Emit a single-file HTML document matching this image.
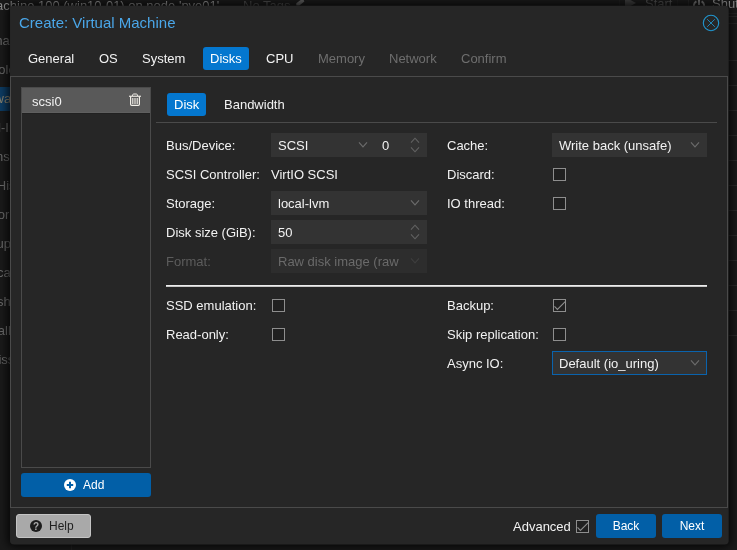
<!DOCTYPE html>
<html><head><meta charset="utf-8"><title>Create: Virtual Machine</title>
<style>
*{box-sizing:border-box;margin:0;padding:0}
html,body{width:737px;height:550px;overflow:hidden;background:#0e0e0e}
body{font-family:"Liberation Sans",sans-serif;font-size:13px;color:#f2f2f2;position:relative}
#bg{position:absolute;left:0;top:0;width:737px;height:550px;background:#1a1a1a;overflow:hidden}
#win{position:absolute;left:10px;top:6px;width:718px;height:538px;background:#262626;border-radius:4px;box-shadow:0 0 9px 3px rgba(0,0,0,.75)}
.t{position:absolute;white-space:nowrap;line-height:16px;color:#f2f2f2}
.dim{color:#6e6e6e}
.fld{position:absolute;height:24px;background:#333;color:#f2f2f2;line-height:26px;padding-left:6px;white-space:nowrap;overflow:hidden}
.cb{position:absolute;width:13px;height:13px;border:1px solid #8e8e8e;background:#202020}
.btn{position:absolute;height:24px;border-radius:3px;background:#025fa7;color:#fff;text-align:center;line-height:24px;overflow:hidden;font-size:12px}
.tab{position:absolute;height:23px;border-radius:3px;background:#0477cf}
.ln{position:absolute;background:#4a4a4a}
svg{position:absolute;overflow:visible}
#all{position:absolute;left:0;top:0;width:737px;height:550px;will-change:transform;overflow:hidden}
</style></head><body>
<div id="all">
<div id="bg">
  <!-- background page remnants (dimmed by modal mask) -->
  <div class="t" style="left:-55px;top:-2px;color:#8c8c8c">Virtual Machine 100 (win10-01) on node 'pve01'</div>
  <div class="t" style="left:243px;top:-2px;color:#4a4a4a">No Tags</div>
  <svg style="left:296px;top:0" width="9" height="6" viewBox="0 0 9 6"><path d="M4.6 0 L7.6 0 L8.4 1.4 L3.4 5.4 L0.3 5.4 L0.3 3.2 Z" fill="#5c5c5c"/></svg>
  <div style="position:absolute;left:619px;top:-8px;width:59px;height:22px;border:1px solid #1f1f1f;border-radius:3px"></div>
  <svg style="left:625px;top:-3px" width="11" height="12" viewBox="0 0 11 12"><path d="M0 0 L11 6 L0 12z" fill="#3c3c3c"/></svg>
  <div class="t" style="left:645px;top:-4px;color:#4e4e4e">Start</div>
  <div style="position:absolute;left:688px;top:-8px;width:90px;height:22px;border:1px solid #242424;border-radius:3px"></div>
  <svg style="left:693px;top:-1px" width="12" height="13" viewBox="0 0 12 13"><path d="M3.4 2.4 A5.2 5.2 0 1 0 8.6 2.4" fill="none" stroke="#707070" stroke-width="1.9"/><path d="M6 0v6" stroke="#707070" stroke-width="1.9"/></svg>
  <div class="t" style="left:712px;top:-4px;color:#8f8f8f">Shutdown</div>
  <div style="position:absolute;left:0;top:87px;width:10px;height:24px;background:#0d3c63"></div>
  <div class="t" style="left:-35px;top:33px;color:#6c6c6c">Summary</div>
  <div class="t" style="left:-32px;top:62px;color:#6c6c6c">Console</div>
  <div class="t" style="left:-33.6px;top:91px;color:#8c8470">Hardware</div>
  <div class="t" style="left:-33px;top:120px;color:#6c6c6c">Cloud-Init</div>
  <div class="t" style="left:-35px;top:149px;color:#6c6c6c">Options</div>
  <div class="t" style="left:-33.5px;top:178px;color:#6c6c6c">Task History</div>
  <div class="t" style="left:-34px;top:207px;color:#6c6c6c">Monitor</div>
  <div class="t" style="left:-32.5px;top:236px;color:#6c6c6c">Backup</div>
  <div class="t" style="left:-32.5px;top:265px;color:#6c6c6c">Replication</div>
  <div class="t" style="left:-33.3px;top:294px;color:#6c6c6c">Snapshots</div>
  <div class="t" style="left:-34px;top:323px;color:#6c6c6c">Firewall</div>
  <div class="t" style="left:-32.6px;top:352px;color:#6c6c6c">Permissions</div>
  <div style="position:absolute;left:726px;top:60px;width:11px;height:277px;background:repeating-linear-gradient(to bottom,#2a2a2a 0,#2a2a2a 1px,transparent 1px,transparent 25px)"></div>
  <div style="position:absolute;left:726px;top:16px;width:11px;height:1px;background:#2a2a2a"></div>
  <div style="position:absolute;left:726px;top:23px;width:11px;height:1px;background:#262626"></div>
  <div style="position:absolute;left:71px;top:540px;width:1px;height:10px;background:#222"></div>
</div>
<div id="win"></div>
<svg style="left:0;top:0" width="737" height="550"><rect x="10.1" y="5.7" width="718.6" height="538.7" rx="4" fill="#262626"/></svg>

<!-- title -->
<div class="t" style="left:19px;top:14px;font-size:15px;line-height:18px;color:#4aa6e8">Create: Virtual Machine</div>
<svg style="left:702px;top:14px" width="18" height="18" viewBox="0 0 18 18"><circle cx="9" cy="9" r="7.7" fill="none" stroke="#2196cf" stroke-width="1.1"/><path d="M5.2 5.2 L12.8 12.8 M12.8 5.2 L5.2 12.8" stroke="#2196cf" stroke-width="0.85" fill="none"/></svg>

<!-- wizard tabs -->
<div class="tab" style="left:203px;top:47px;width:46px"></div>
<div class="t" style="left:28px;top:51px">General</div>
<div class="t" style="left:99px;top:51px">OS</div>
<div class="t" style="left:142px;top:51px">System</div>
<div class="t" style="left:210px;top:51px;color:#fff">Disks</div>
<div class="t" style="left:266px;top:51px">CPU</div>
<div class="t dim" style="left:318px;top:51px">Memory</div>
<div class="t dim" style="left:389px;top:51px">Network</div>
<div class="t dim" style="left:461px;top:51px">Confirm</div>

<!-- body frame -->
<div class="ln" style="left:10px;top:76px;width:718px;height:1px"></div>
<div class="ln" style="left:10px;top:507px;width:718px;height:1px"></div>
<div class="ln" style="left:10px;top:76px;width:1px;height:432px"></div>
<div class="ln" style="left:727px;top:76px;width:1px;height:432px"></div>

<!-- disk list -->
<div style="position:absolute;left:21px;top:87px;width:130px;height:381px;border:1px solid #4a4a4a;background:#262626"></div>
<div style="position:absolute;left:22px;top:88px;width:128px;height:25px;background:#595959"></div>
<div style="position:absolute;left:22px;top:112px;width:128px;height:1px;background:#5f5f5f"></div>
<div style="position:absolute;left:22px;top:113px;width:128px;height:1px;background:#212121"></div>
<div class="t" style="left:32px;top:94px">scsi0</div>
<svg style="left:129px;top:93px" width="12" height="13" viewBox="0 0 12 13"><rect x="0" y="2.7" width="12" height="1.1" fill="#f4f1ea"/><path d="M3.3 2.9 L3.9 1.4 Q4.1 1 4.5 1 H7.5 Q7.9 1 8.1 1.4 L8.7 2.9" fill="none" stroke="#f4f1ea" stroke-width="1"/><path d="M1.6 3.6 V11.3 Q1.6 12.4 2.7 12.4 H9.3 Q10.4 12.4 10.4 11.3 V3.6" fill="none" stroke="#f4f1ea" stroke-width="1.2"/><path d="M3.8 4.9 V11 M6 4.9 V11 M8.2 4.9 V11" stroke="#f4f1ea" stroke-width="1.1"/></svg>
<div class="btn" style="left:21px;top:473px;width:130px"></div>
<svg style="left:64px;top:479px" width="12" height="12" viewBox="0 0 12 12"><circle cx="6" cy="6" r="6" fill="#fff"/><path d="M6 2.8v6.4M2.8 6h6.4" stroke="#025fa7" stroke-width="2"/></svg>
<div class="t" style="left:83px;top:477px;font-size:12px;color:#fff">Add</div>

<!-- sub tabs -->
<div class="tab" style="left:167px;top:93px;width:39px"></div>
<div class="t" style="left:174px;top:97px;color:#fff">Disk</div>
<div class="t" style="left:224px;top:97px">Bandwidth</div>
<div class="ln" style="left:156px;top:122px;width:561px;height:1px"></div>

<!-- left column -->
<div class="t" style="left:166px;top:138px">Bus/Device:</div>
<div class="fld" style="left:271px;top:133px;width:156px;padding-left:7px">SCSI</div>
<div class="t" style="left:382px;top:138px">0</div>
<div class="t" style="left:166px;top:167px">SCSI Controller:</div>
<div class="t" style="left:271px;top:167px">VirtIO SCSI</div>
<div class="t" style="left:166px;top:196px">Storage:</div>
<div class="fld" style="left:271px;top:191px;width:156px;padding-left:7px">local-lvm</div>
<div class="t" style="left:166px;top:225px">Disk size (GiB):</div>
<div class="fld" style="left:271px;top:220px;width:156px;padding-left:7px">50</div>
<div class="t dim" style="left:166px;top:254px;color:#5c5c5c">Format:</div>
<div class="fld" style="left:271px;top:249px;width:156px;padding-left:7px;background:#2d2d2d;color:#6a6a6a">Raw disk image (raw</div>

<!-- right column -->
<div class="t" style="left:447px;top:138px">Cache:</div>
<div class="fld" style="left:552px;top:133px;width:155px;padding-left:7px">Write back (unsafe)</div>
<div class="t" style="left:447px;top:167px">Discard:</div>
<div class="cb" style="left:553px;top:168px"></div>
<div class="t" style="left:447px;top:196px">IO thread:</div>
<div class="cb" style="left:553px;top:197px"></div>

<!-- divider -->
<div style="position:absolute;left:166px;top:285px;width:541px;height:1px;background:#ececec"></div>
<div style="position:absolute;left:166px;top:286px;width:541px;height:1px;background:#c6c6c6"></div>

<!-- advanced -->
<div class="t" style="left:166px;top:298px">SSD emulation:</div>
<div class="cb" style="left:272px;top:299px"></div>
<div class="t" style="left:166px;top:327px">Read-only:</div>
<div class="cb" style="left:272px;top:328px"></div>
<div class="t" style="left:447px;top:298px">Backup:</div>
<div class="cb" style="left:553px;top:299px"></div>
<div class="t" style="left:447px;top:327px">Skip replication:</div>
<div class="cb" style="left:553px;top:328px"></div>
<div class="t" style="left:447px;top:356px">Async IO:</div>
<div class="fld" style="left:552px;top:351px;width:155px;height:24px;line-height:24px;border:1px solid #0a63ad;padding-left:6px">Default (io_uring)</div>

<svg style="left:553px;top:299px" width="13" height="13" viewBox="0 0 13 13"><path d="M1.5 7.3 L4.4 10.4 L12.2 2.7" fill="none" stroke="#8e8e8e" stroke-width="1.1"/></svg>
<!-- triggers -->
<svg style="left:358px;top:141.5px" width="10" height="6" viewBox="0 0 10 6"><path d="M1 0.4 L5 4.9 L9 0.4" fill="none" stroke="#6c6c6c" stroke-width="1.1"/></svg>
<svg style="left:410px;top:137px" width="10" height="16" viewBox="0 0 10 16"><path d="M1 5.6 L5 1.2 L9 5.6 M1 10.4 L5 14.8 L9 10.4" fill="none" stroke="#626262" stroke-width="1.1"/></svg>
<svg style="left:410px;top:199.5px" width="10" height="6" viewBox="0 0 10 6"><path d="M1 0.4 L5 4.9 L9 0.4" fill="none" stroke="#6c6c6c" stroke-width="1.1"/></svg>
<svg style="left:410px;top:224px" width="10" height="16" viewBox="0 0 10 16"><path d="M1 5.6 L5 1.2 L9 5.6 M1 10.4 L5 14.8 L9 10.4" fill="none" stroke="#626262" stroke-width="1.1"/></svg>
<svg style="left:410px;top:257.5px" width="10" height="6" viewBox="0 0 10 6"><path d="M1 0.4 L5 4.9 L9 0.4" fill="none" stroke="#3e3e3e" stroke-width="1.1"/></svg>
<svg style="left:690px;top:141.5px" width="10" height="6" viewBox="0 0 10 6"><path d="M1 0.4 L5 4.9 L9 0.4" fill="none" stroke="#6c6c6c" stroke-width="1.1"/></svg>
<svg style="left:690px;top:359.5px" width="10" height="6" viewBox="0 0 10 6"><path d="M1 0.4 L5 4.9 L9 0.4" fill="none" stroke="#6c6c6c" stroke-width="1.1"/></svg>
<!-- footer -->
<div style="position:absolute;left:16px;top:514px;width:75px;height:24px;border-radius:3px;background:#a9a9a9;border:1px solid #c4c4c4"></div>
<svg style="left:30px;top:520px" width="12" height="12" viewBox="0 0 12 12"><circle cx="6" cy="6" r="6" fill="#1c1c1c"/><text x="6" y="9.6" text-anchor="middle" font-family="Liberation Sans" font-weight="bold" font-size="10" fill="#a9a9a9">?</text></svg>
<div class="t" style="left:49px;top:518px;font-size:12px;color:#1e1e1e">Help</div>
<div class="t" style="left:513px;top:519px">Advanced</div>
<div class="cb" style="left:576px;top:520px"></div>
<svg style="left:576px;top:520px" width="13" height="13" viewBox="0 0 13 13"><path d="M1.5 7.3 L4.4 10.4 L12.2 2.7" fill="none" stroke="#8e8e8e" stroke-width="1.1"/></svg>
<div class="btn" style="left:596px;top:514px;width:60px">Back</div>
<div class="btn" style="left:662px;top:514px;width:60px">Next</div>
</div>
</body></html>
